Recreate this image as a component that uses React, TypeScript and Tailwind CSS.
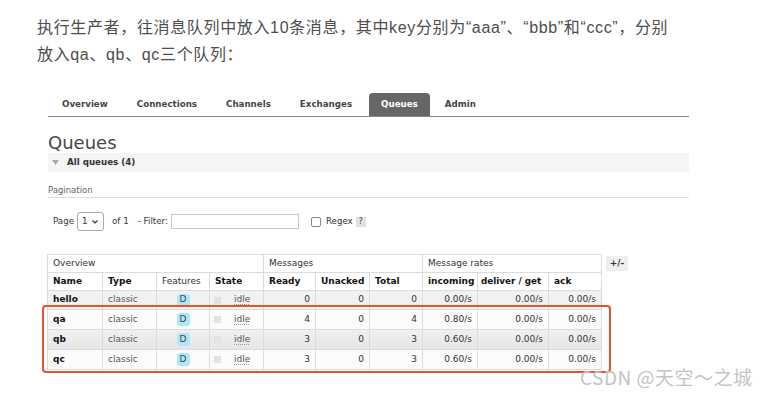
import React from 'react';

const ui = "font-['DejaVu_Sans',Verdana,sans-serif]";

const tabs = ['Overview', 'Connections', 'Channels', 'Exchanges', 'Queues', 'Admin'];

const rows = [
  { name: 'hello', ready: '0', unacked: '0', total: '0', incoming: '0.00/s', h: 'h-[19px]', bg: 'bg-[#f1f1f1]' },
  { name: 'qa', ready: '4', unacked: '0', total: '4', incoming: '0.80/s', h: 'h-[20px]', bg: 'bg-[#fbfbfb]' },
  { name: 'qb', ready: '3', unacked: '0', total: '3', incoming: '0.60/s', h: 'h-[20px]', bg: 'bg-gradient-to-b from-[#f0f0f0] to-[#e6e6e6]' },
  { name: 'qc', ready: '3', unacked: '0', total: '3', incoming: '0.60/s', h: 'h-[20px]', bg: 'bg-[#fbfbfb]' },
];

const cell = 'flex items-center whitespace-nowrap border-r border-b border-[#dcdcdc] px-[5px]';

function QueueTable() {
  return (
    <div className="relative flex items-start ml-[-1px]">
      <div className="grid grid-cols-[55px_54px_53px_54px_52px_54px_53px_55px_71px_53px] border-t border-l border-[#dcdcdc] text-[9px] text-[#333]">
        {/* group headers */}
        <div className={`${cell} col-span-4 h-[18px]`}>Overview</div>
        <div className={`${cell} col-span-3 h-[18px]`}>Messages</div>
        <div className={`${cell} col-span-3 h-[18px]`}>Message rates</div>

        {/* column headers */}
        <div className={`${cell} h-[18px] font-bold text-[#111]`}>Name</div>
        <div className={`${cell} h-[18px] font-bold text-[#111]`}>Type</div>
        <div className={`${cell} h-[18px]`}>Features</div>
        <div className={`${cell} h-[18px] font-bold text-[#111]`}>State</div>
        <div className={`${cell} h-[18px] font-bold text-[#111]`}>Ready</div>
        <div className={`${cell} h-[18px] font-bold text-[#111]`}>Unacked</div>
        <div className={`${cell} h-[18px] font-bold text-[#111]`}>Total</div>
        <div className={`${cell} h-[18px] font-bold text-[#111]`}>incoming</div>
        <div className={`${cell} h-[18px] font-bold text-[#111] !px-[3px] text-[8.8px]`}>deliver / get</div>
        <div className={`${cell} h-[18px] font-bold text-[#111]`}>ack</div>

        {rows.map((r) => (
          <React.Fragment key={r.name}>
            <div className={`${cell} ${r.h} ${r.bg} font-bold text-[#111]`}>{r.name}</div>
            <div className={`${cell} ${r.h} ${r.bg} text-[#555]`}>classic</div>
            <div className={`${cell} ${r.h} ${r.bg} justify-center`}>
              <span className="flex items-center justify-center w-[13px] h-[13px] rounded-[3px] bg-[#ade8f7] text-[9px] text-[#445]">D</span>
            </div>
            <div className={`${cell} ${r.h} ${r.bg} pl-[4px]`}>
              <span className="w-[7px] h-[7px] bg-[#e2e2e2]" />
              <span className="ml-[13px] text-[#555] underline decoration-dotted decoration-[#999] underline-offset-2">idle</span>
            </div>
            <div className={`${cell} ${r.h} ${r.bg} justify-end`}>{r.ready}</div>
            <div className={`${cell} ${r.h} ${r.bg} justify-end`}>{r.unacked}</div>
            <div className={`${cell} ${r.h} ${r.bg} justify-end`}>{r.total}</div>
            <div className={`${cell} ${r.h} ${r.bg} justify-end`}>{r.incoming}</div>
            <div className={`${cell} ${r.h} ${r.bg} justify-end`}>0.00/s</div>
            <div className={`${cell} ${r.h} ${r.bg} justify-end`}>0.00/s</div>
          </React.Fragment>
        ))}
      </div>

      <button className="ml-[4px] mt-[2px] h-[15px] w-[22px] bg-[#eeeeee] text-[9px] font-bold text-[#333] flex items-center justify-center">
        +/-
      </button>

      {/* annotation box */}
      <div className="absolute left-[-5px] top-[51px] w-[569px] h-[68px] border-2 border-[#e4532c] rounded-[4px] pointer-events-none" />
    </div>
  );
}

export default function App() {
  return (
    <div className="relative w-[767px] h-[397px] bg-white overflow-hidden">
      <p className="pl-[37px] pt-[14px] text-[16px] leading-[27px] tracking-[0.65px] text-[#4d4d4d] font-['Liberation_Sans','Noto_Sans_CJK_SC',sans-serif]">
        执行生产者，往消息队列中放入10条消息，其中key分别为“aaa”、“bbb”和“ccc”，分别
        <br />
        放入qa、qb、qc三个队列：
      </p>

      <div className={`ml-[48px] w-[641px] ${ui}`}>
        {/* nav */}
        <div className="mt-[25px] flex items-end gap-[1px] h-[24px] border-b border-[#888]">
          {tabs.map((t) => (
            <div
              key={t}
              className={`h-[23px] flex items-center text-[8.7px] font-bold ${
                t === 'Queues' ? 'ml-[2px] px-[12px] bg-[#666] text-white rounded-t-[4px]' : 'px-[14px] text-[#444]'
              }`}
            >
              {t}
            </div>
          ))}
        </div>

        <h1 className="mt-[16px] h-[20px] text-[18px] leading-[20px] text-[#484848]">Queues</h1>

        <div className="h-[19px] bg-[#f5f5f5] flex items-center pl-[4px]">
          <svg width="7" height="5" viewBox="0 0 7 5" className="mr-[8px]">
            <path d="M0 0 H7 L3.5 5 Z" fill="#aaa" />
          </svg>
          <span className="text-[8.7px] font-bold text-[#333]">All queues (4)</span>
        </div>

        <div className="mt-[12px] pb-[1px] border-b border-[#dddddd] text-[8.5px] leading-[12px] text-[#666]">
          Pagination
        </div>

        <div className="mt-[14px] h-[19px] flex items-center pl-[5px] text-[8.7px] text-[#333]">
          <span>Page</span>
          <div className="ml-[3px] w-[27px] h-[19px] border border-[#aaa] rounded-[3px] bg-white flex items-center pl-[4px]">
            <span>1</span>
            <svg width="6" height="4" viewBox="0 0 6 4" className="ml-[4px]">
              <path d="M0.5 0.5 L3 3 L5.5 0.5" stroke="#333" strokeWidth="1.1" fill="none" />
            </svg>
          </div>
          <span className="ml-[8px]">of 1</span>
          <span className="ml-[9px]">- Filter:</span>
          <div className="ml-[3px] w-[128px] h-[15px] border border-[#c8c8c8] bg-white" />
          <div className="ml-[12px] w-[10px] h-[10px] border border-[#888] rounded-[2px] bg-white" />
          <span className="ml-[5px]">Regex</span>
          <span className="ml-[3px] w-[10px] h-[10px] bg-[#e2e2e2] text-[8px] flex items-center justify-center text-[#444]">?</span>
        </div>

        <div className="mt-[23px]">
          <QueueTable />
        </div>
      </div>

      <div className="absolute left-[580px] top-[365px] text-[19px] leading-[24px] tracking-[0.5px] text-[#c4c4c4] font-['Noto_Sans_CJK_SC',sans-serif] whitespace-nowrap">
        CSDN @天空～之城
      </div>
    </div>
  );
}
